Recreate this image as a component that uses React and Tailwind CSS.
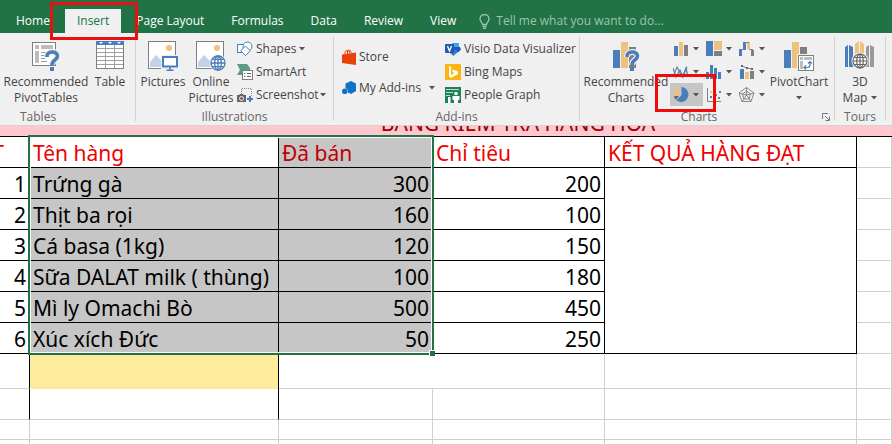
import { useState } from 'react';

const BLUE = '#4a7ebb';
const SAND = '#ebc27e';
const GREY = '#7f7f7f';

const tabs = ['Home', 'Insert', 'Page Layout', 'Formulas', 'Data', 'Review', 'View'];

const goods = [
  { id: 1, name: 'Trứng gà', sold: 300, target: 200 },
  { id: 2, name: 'Thịt ba rọi', sold: 160, target: 100 },
  { id: 3, name: 'Cá basa (1kg)', sold: 120, target: 150 },
  { id: 4, name: 'Sữa DALAT milk ( thùng)', sold: 100, target: 180 },
  { id: 5, name: 'Mì ly Omachi Bò', sold: 500, target: 450 },
  { id: 6, name: 'Xúc xích Đức', sold: 50, target: 250 },
];

/* ---------- icons ---------- */

function Svg({ w = 16, h = 16, children }) {
  return (
    <svg width={w} height={h} viewBox={`0 0 ${w} ${h}`} fill="none" className="shrink-0" aria-hidden="true">
      {children}
    </svg>
  );
}

function QuestionMark({ x = 0 }) {
  const d = `M${x} 16v-1c0-5 10.500-5.500 10.500 0c0 4-5.500 4-5.500 9`;
  return (
    <>
      <path d={d} stroke="#f0f0f0" strokeWidth="6" />
      <path d={d} stroke={BLUE} strokeWidth="3.600" />
      <rect x={x + 3} y="26" width="4" height="4" fill={BLUE} />
    </>
  );
}

function PivotTablesIcon() {
  return (
    <Svg w={30} h={30}>
      <rect x="1.500" y="1.500" width="23" height="23" fill="#fff" stroke={GREY} />
      <path d="M4 4h4v4H4zM10 4h12v4H10zM4 10h4v12H4z" fill="#bcbcbc" />
      <path d="M10 11.500h6M10 14.500h4M10 17.500h4M10 20.500h6" stroke="#9a9a9a" />
      <QuestionMark x={16} />
    </Svg>
  );
}

function TableIcon() {
  return (
    <Svg w={30} h={30}>
      <rect x="1.500" y="1.500" width="27" height="26" fill="#fff" stroke={GREY} />
      <path d="M1 0h28v4H1z" fill={BLUE} />
      <path d="M4 1h4l-2 2zM13 1h4l-2 2zM22 1h4l-2 2z" fill="#fff" />
      <path d="M2 7.500h26M2 11.500h26M2 15.500h26M2 19.500h26M2 23.500h26M10.500 4v23M19.500 4v23" stroke="#a0a0a0" />
    </Svg>
  );
}

function Photo() {
  return (
    <>
      <rect x=".5" y=".5" width="27" height="27" fill="#fff" stroke={GREY} />
      <circle cx="21" cy="7" r="3" fill={SAND} />
      <path d="M2 26v-5l6-7 6 6v6z" fill="#c3d2e5" />
    </>
  );
}

function PicturesIcon() {
  return (
    <Svg w={30} h={30}>
      <Photo />
      <rect x="13" y="14" width="17" height="14" fill="#f0f0f0" />
      <rect x="15" y="16" width="14" height="9.500" fill="#fff" stroke={BLUE} strokeWidth="2" />
      <path d="M22 26v3M18.500 29.200h7" stroke={BLUE} strokeWidth="1.500" />
    </Svg>
  );
}

function OnlinePicturesIcon() {
  return (
    <Svg w={30} h={30}>
      <Photo />
      <circle cx="22" cy="22" r="8.500" fill="#f0f0f0" />
      <g stroke={BLUE} strokeWidth="1.300">
        <circle cx="22" cy="22" r="7" fill="#fff" />
        <ellipse cx="22" cy="22" rx="3.300" ry="7" />
        <path d="M15 22h14M22 15v14M16.500 18.300h11M16.500 25.700h11" />
      </g>
    </Svg>
  );
}

function RecommendedChartsIcon() {
  return (
    <Svg w={30} h={30}>
      <path d="M2 9h7v18H2z" fill={BLUE} />
      <path d="M10 1h7v26h-7z" fill={SAND} />
      <path d="M18 6h7v21h-7z" fill={GREY} />
      <QuestionMark x={16} />
    </Svg>
  );
}

function PivotChartIcon() {
  return (
    <Svg w={30} h={30}>
      <path d="M0 9h7v18H0z" fill={BLUE} />
      <path d="M8 1h7v26H8z" fill={SAND} />
      <path d="M16 6h7v9h-7z" fill={GREY} />
      <rect x="13" y="13" width="17" height="17" fill="#f0f0f0" />
      <rect x="14.500" y="14.500" width="15" height="15" fill="#fff" stroke={GREY} />
      <path d="M16 16h3v3h-3zM20 16h8v3h-8zM16 20h3v8h-3z" fill="#bcbcbc" />
      <path d="M20 26.500h3.500q2.500 0 2.500-3V20.500M22 24.500l-2 2 2 2M24 22.500l2-2 2 2" stroke={BLUE} strokeWidth="1.200" />
    </Svg>
  );
}

function MapIcon() {
  return (
    <Svg w={30} h={30}>
      <path d="M0 6l3-2v22H0zM4 4l4 2v20H4z" fill={BLUE} />
      <path d="M10 3l4-3v22h-4zM15 0l4 3v19h-4z" fill={SAND} />
      <path d="M21 6l3-2v22h-3zM25 4l4 2v20h-4z" fill="#9a9a9a" />
      <circle cx="15" cy="20" r="8.500" fill="#f0f0f0" />
      <g stroke="#666" strokeWidth="1.200">
        <circle cx="15" cy="20" r="7" fill="#fff" />
        <ellipse cx="15" cy="20" rx="3.300" ry="7" />
        <path d="M8 20h14M15 13v14M9.500 16.500h11M9.500 23.500h11" />
      </g>
    </Svg>
  );
}

function ShapesIcon() {
  return (
    <Svg>
      <rect x=".5" y="3.500" width="8" height="8" fill="#fff" stroke={BLUE} />
      <circle cx="10.500" cy="5.500" r="4.500" fill="#fff" stroke={BLUE} />
      <path d="M8.500 5l4.800 4.800-4.800 4.800-4.800-4.800z" fill="#fff" stroke={BLUE} />
    </Svg>
  );
}

function SmartArtIcon() {
  return (
    <Svg>
      <path d="M0 0h10l3 4v2H5v5H0l3-5z" fill="#5b9c84" />
      <rect x="5.500" y="6.500" width="10" height="9" fill="#fff" stroke={GREY} />
      <path d="M7 9.500h1.500M7 12.500h1.500M10 9.500h4M10 12.500h4" stroke="#666" />
    </Svg>
  );
}

function ScreenshotIcon() {
  return (
    <Svg>
      <path d="M4.500 7V1.500h10V9" stroke="#888" strokeDasharray="1 1" />
      <path d="M0 8h2l1-1h3l1 1h2v7H0z" fill="#666" />
      <circle cx="4.500" cy="11.500" r="2" fill="#666" stroke="#f0f0f0" />
      <path d="M10 12h6M13 9v6" stroke={BLUE} strokeWidth="2" />
    </Svg>
  );
}

function StoreIcon() {
  return (
    <Svg w={14} h={16}>
      <path d="M3 5.500V2.500q2-2 4.500 0V4M5.500 5V1.500q2.500-1.500 3.500 1V4" stroke="#e8410a" />
      <path d="M0 5.500L14 3.500V16L0 14z" fill="#e8410a" />
    </Svg>
  );
}

function AddinsIcon() {
  return (
    <Svg w={14} h={16}>
      <path d="M9 1l5 2.500v7.500L9 14l-3-1.500V10L3.500 8V3.500z" fill="#1072c4" />
      <circle cx="2.800" cy="11.300" r="2.800" fill="#1072c4" />
    </Svg>
  );
}

function VisioIcon() {
  return (
    <Svg>
      <rect x="7" y="2" width="7" height="5" fill="#41a5ee" />
      <path d="M9 6h6l1 2.500-3 3H9z" fill="#185abd" />
      <path d="M5 9h7v2.500L8.500 15 5 12z" fill="#2b7cd3" />
      <rect y="3" width="9" height="9" rx="1" fill="#2458ac" />
      <path d="M2.500 5l2 5 2-5" stroke="#fff" strokeWidth="1.300" />
    </Svg>
  );
}

function BingIcon() {
  return (
    <Svg>
      <path d="M0 0h16v16H0z" fill="#fbb612" />
      <path d="M4 2l2 .8v8.200l3.500-2-1.500-.8L7 5.500l6 2V10l-7 4-2-1.500z" fill="#fff" />
    </Svg>
  );
}

function PeopleIcon() {
  return (
    <Svg>
      <path d="M0 0h16v16H0z" fill="#1e8057" />
      <path d="M1 2.500h13M1 5.500h7M1 8.500h4" stroke="#b9dccb" />
      <circle cx="11" cy="6.500" r="1.800" fill="#fff" />
      <path d="M7.500 9h7v4H13v3H9v-3H7.500zM3 10h2.500v6H3z" fill="#fff" />
    </Svg>
  );
}

const chartKinds = [
  {
    label: 'Column chart',
    art: (
      <>
        <path d="M1 5h4v10H1z" fill={BLUE} />
        <path d="M6 1h4v14H6z" fill={SAND} />
        <path d="M11 4h4v11h-4z" fill={GREY} />
      </>
    ),
  },
  {
    label: 'Hierarchy chart',
    art: (
      <>
        <path d="M0 0h7v15H0z" fill={BLUE} />
        <path d="M8 0h8v9H8z" fill={SAND} />
        <path d="M8 10h8v5H8z" fill={GREY} />
      </>
    ),
  },
  {
    label: 'Waterfall chart',
    art: (
      <>
        <path d="M0 8h3v7H0zM4 1h3v8H4z" fill={BLUE} />
        <path d="M8 1h3v7H8z" fill={SAND} />
        <path d="M12 9h3v6h-3z" fill={GREY} />
        <path d="M2 8.500h3M6 1.500h4M10 8.500h4" stroke={GREY} />
      </>
    ),
  },
  {
    label: 'Line chart',
    art: (
      <>
        <path d="M0 13L4 3l5 10 5-10" stroke={GREY} strokeWidth="1.200" />
        <path d="M0 4l3 9 4-7 3 7 3-9 2 9" stroke={BLUE} strokeWidth="1.200" />
      </>
    ),
  },
  {
    label: 'Statistic chart',
    art: <path d="M0 8h3v7H0zM4 1h3v14H4zM8 4h3v11H8zM12 8h3v7h-3z" fill={BLUE} />,
  },
  {
    label: 'Combo chart',
    art: (
      <>
        <path d="M1 5h4v10H1z" fill={BLUE} />
        <path d="M6 8h4v7H6z" fill={SAND} />
        <path d="M11 7h4v8h-4z" fill={GREY} />
        <path d="M3 2l5 2 5 1" stroke={GREY} />
        <path d="M2 1h2v2H2zM7 3h2v2H7zM12 4h2v2h-2z" fill="#666" />
      </>
    ),
  },
  {
    label: 'Pie chart',
    active: true,
    art: (
      <>
        <path d="M7 7L7 .5A7 7 0 0 0 0 8h7z" fill={SAND} />
        <path d="M6 9H1a7 7 0 0 0 2 4z" fill="#666" />
        <path d="M8.500 0a7.500 7.500 0 1 1-5 13.500L8.500 8z" fill={BLUE} />
      </>
    ),
  },
  {
    label: 'Scatter chart',
    art: (
      <>
        <path d="M1.500 1v13.500H15" stroke={GREY} />
        <path d="M4 9h2v2H4zM9 7h2v2H9zM13 4h2v2h-2z" fill={BLUE} />
        <path d="M4 4h2v2H4zM8 11h2v2H8z" fill={SAND} />
        <path d="M12 10h2v2h-2z" fill={GREY} />
      </>
    ),
  },
  {
    label: 'Radar chart',
    art: (
      <>
        <path d="M7.500 .5l7.500 5.500-3 8.500H3L0 6zM7.500 4l4 3-1.500 5H5L3.500 7z" stroke="#888" />
        <path d="M7.500 .5V8l7.500-2M7.500 8l4.500 6.500M7.500 8L3 14.500M7.500 8L0 6" stroke="#888" />
      </>
    ),
  },
];

/* ---------- ribbon ---------- */

function Caret() {
  return (
    <svg width="6" height="4" viewBox="0 0 6 4" className="shrink-0" aria-hidden="true">
      <path d="M0 0h6L3 3.500z" fill="#555" />
    </svg>
  );
}

function Group({ title, className, titleClass = 'text-center', children }) {
  return (
    <section className={`flex shrink-0 flex-col pt-1 ${className}`}>
      <div className="flex h-[72px] items-start">{children}</div>
      <div className={`relative h-4 text-xs leading-4 text-[#666] ${titleClass}`}>{title}</div>
    </section>
  );
}

function Separator() {
  return <div className="my-1 w-px shrink-0 bg-[#d2d2d2]" />;
}

function LargeButton({ icon, lines, className, caret }) {
  return (
    <button type="button" className={`flex shrink-0 flex-col items-center gap-[3px] pt-1 leading-4 whitespace-nowrap ${className}`}>
      {icon}
      <span className="flex flex-col items-center">
        {lines.map((line, i) => (
          <span key={line} className="flex h-4 items-center gap-1">
            {line}
            {caret && lines.length > 1 && i === lines.length - 1 && <Caret />}
          </span>
        ))}
        {caret && lines.length === 1 && (
          <span className="flex h-4 items-center">
            <Caret />
          </span>
        )}
      </span>
    </button>
  );
}

function SmallButton({ icon, label, caret, className = 'h-[23px]', caretGap = 'gap-[3px]' }) {
  return (
    <button type="button" className={`flex items-center gap-[3px] whitespace-nowrap ${className}`}>
      {icon}
      <span className={`flex items-center ${caretGap}`}>
        {label}
        {caret && <Caret />}
      </span>
    </button>
  );
}

function ChartGallery() {
  return (
    <div className="grid shrink-0 grid-cols-3">
      {chartKinds.map(({ label, art, active }) => (
        <button
          key={label}
          type="button"
          aria-label={label}
          className={`relative flex h-[23px] w-[33px] items-center gap-1 pl-[3px] ${active ? 'bg-[#c6c6c6]' : ''}`}
        >
          <Svg>{art}</Svg>
          <Caret />
          {active && <span className="absolute -top-[9px] -left-[15px] z-10 h-[38px] w-[61px] border-3 border-[#f00a0a]" />}
        </button>
      ))}
    </div>
  );
}

function Ribbon() {
  return (
    <div className="flex h-[93px] border-b border-[#d4d4d4] bg-[#f0f0f0] text-xs text-[#444]">
      <Group title="Tables" className="w-[135px]" titleClass="pl-5 text-left">
        <LargeButton icon={<PivotTablesIcon />} lines={['Recommended', 'PivotTables']} className="w-[92px]" />
        <LargeButton icon={<TableIcon />} lines={['Table']} className="w-[36px]" />
      </Group>
      <Separator />
      <Group title="Illustrations" className="w-[197px]">
        <LargeButton icon={<PicturesIcon />} lines={['Pictures']} className="w-[54px]" />
        <LargeButton icon={<OnlinePicturesIcon />} lines={['Online', 'Pictures']} className="w-[42px]" />
        <div className="ml-[5px]">
          <SmallButton icon={<ShapesIcon />} label="Shapes" caret />
          <SmallButton icon={<SmartArtIcon />} label="SmartArt" />
          <SmallButton icon={<ScreenshotIcon />} label="Screenshot" caret caretGap="gap-px" />
        </div>
      </Group>
      <Separator />
      <Group title="Add-ins" className="w-[245px]">
        <div className="w-[111px] pt-1 pl-2">
          <SmallButton icon={<StoreIcon />} label="Store" className="h-[31px]" />
          <SmallButton icon={<AddinsIcon />} label="My Add-ins" caret caretGap="gap-2" className="h-[31px]" />
        </div>
        <div>
          <SmallButton icon={<VisioIcon />} label="Visio Data Visualizer" />
          <SmallButton icon={<BingIcon />} label="Bing Maps" />
          <SmallButton icon={<PeopleIcon />} label="People Graph" />
        </div>
      </Group>
      <Separator />
      <Group
        title={
          <>
            Charts
            <button type="button" aria-label="Charts options" className="absolute right-1 bottom-1">
              <Svg w={8} h={8}>
                <path d="M.5 6V.5H6M3 3l4 4M7.500 3.500v4h-4" stroke="#777" />
              </Svg>
            </button>
          </>
        }
        className="w-[254px]"
        titleClass="pr-4 text-center"
      >
        <LargeButton icon={<RecommendedChartsIcon />} lines={['Recommended', 'Charts']} className="w-[90px] pl-[2px]" />
        <ChartGallery />
        <LargeButton icon={<PivotChartIcon />} lines={['PivotChart']} caret className="w-[60px]" />
      </Group>
      <Separator />
      <Group title="Tours" className="w-[50px]">
        <LargeButton icon={<MapIcon />} lines={['3D', 'Map']} caret className="w-full" />
      </Group>
      <Separator />
    </div>
  );
}

function TabBar({ active, onSelect }) {
  return (
    <nav className="flex h-[33px] items-end gap-[3px] bg-[#217346] pl-1 text-xs text-white">
      {tabs.map((tab) => (
        <button
          key={tab}
          type="button"
          onClick={() => onSelect(tab)}
          className={`relative h-6 px-3 whitespace-nowrap ${tab === active ? 'bg-[#f0f0f0] text-[#217346]' : ''}`}
        >
          {tab}
          {tab === 'Insert' && <span className="absolute -top-[7px] -left-[15px] z-10 h-[38px] w-[88px] border-3 border-[#e81010]" />}
        </button>
      ))}
      <label className="ml-2 flex h-6 flex-1 items-center gap-1.5 text-[#9dc4ae]">
        <Svg w={11} h={15}>
          <path d="M3.500 10.500c0-2-2.500-3-2.500-5.500a4.500 4.500 0 0 1 9 0c0 2.500-2.500 3.500-2.500 5.500zM3.500 12.500h4M4 14.500h3" stroke="#9dc4ae" strokeWidth="1.300" />
        </Svg>
        <input
          type="text"
          aria-label="Tell me"
          placeholder="Tell me what you want to do..."
          className="min-w-0 flex-1 bg-transparent outline-none placeholder:text-[#9dc4ae]"
        />
      </label>
    </nav>
  );
}

/* ---------- sheet ---------- */

function Sheet() {
  const line = 'border-r border-b border-black pt-[2px] pb-0';
  const grid = 'border-r border-b border-[#d0d0d0]';

  return (
    <div className="relative overflow-hidden bg-white font-['Noto_Sans',sans-serif] text-[21px] leading-[28px] text-black">
      <table className="w-full table-fixed border-separate border-spacing-0">
        <colgroup>
          <col className="w-[30px]" />
          <col className="w-[249px]" />
          <col className="w-[154px]" />
          <col className="w-[172px]" />
          <col className="w-[252px]" />
          <col />
        </colgroup>
        <thead>
          <tr>
            <th colSpan={6} className="border-b border-black bg-[#ffc7ce] p-0 font-normal text-[#9c0006]">
              <div className="flex h-[10px] items-end justify-center overflow-hidden pl-36 leading-[26px]">BẢNG KIỂM TRA HÀNG HÓA</div>
            </th>
          </tr>
          <tr className="h-[31px] text-left text-[#f00000]">
            <th className={`${line} px-0 font-normal`}>
              <div className="flex justify-end overflow-hidden pr-[25px]">STT</div>
            </th>
            <th className={`${line} px-[3px] font-normal`}>Tên hàng</th>
            <th className={`${line} bg-[#c6c6c6] px-[3px] font-normal text-[#c00000]`}>Đã bán</th>
            <th className={`${line} px-[3px] font-normal`}>Chỉ tiêu</th>
            <th className={`${line} px-[3px] font-normal`}>KẾT QUẢ HÀNG ĐẠT</th>
            <th className={`${grid} p-0`} />
          </tr>
        </thead>
        <tbody>
          {goods.map((item, i) => (
            <tr key={item.id} className="h-[31px]">
              <td className={`${line} px-[3px] text-right`}>{item.id}</td>
              <td className={`${line} bg-[#c6c6c6] px-[3px] whitespace-nowrap`}>{item.name}</td>
              <td className={`${line} bg-[#c6c6c6] px-[3px] text-right`}>{item.sold}</td>
              <td className={`${line} px-[3px] text-right`}>{item.target}</td>
              {i === 0 && <td rowSpan={goods.length} className={`${line} px-0`} />}
              <td className={`${grid} p-0`} />
            </tr>
          ))}
          <tr className="h-[35px]">
            <td className="border-r border-b border-r-black border-b-[#d0d0d0] p-0" />
            <td className="border-r border-black bg-[#ffeb9c] p-0" />
            <td colSpan={2} className={`${grid} p-0`} />
            <td className={`${grid} p-0`} />
            <td className={`${grid} p-0`} />
          </tr>
          <tr className="h-[31px]">
            <td className="border-r border-b border-r-black border-b-[#d0d0d0] p-0" />
            <td className="border-r border-b border-r-black border-b-[#d0d0d0] p-0" />
            <td className={`${grid} p-0`} />
            <td className={`${grid} p-0`} />
            <td className={`${grid} p-0`} />
            <td className={`${grid} p-0`} />
          </tr>
          {['first', 'second'].map((row) => (
            <tr key={row} className="h-5">
              {[0, 1, 2, 3, 4, 5].map((col) => (
                <td key={col} className={`${grid} p-0`} />
              ))}
            </tr>
          ))}
        </tbody>
      </table>

      {/* selected range with its fill handle */}
      <div className="pointer-events-none absolute top-[9px] left-[28px] h-[220px] w-[406px] border-2 border-[#217346]">
        <div className="h-full border border-white" />
        <div className="absolute -right-[3px] -bottom-[3px] size-[6px] border-t border-l border-white bg-[#217346]" />
      </div>
    </div>
  );
}

export default function App() {
  const [tab, setTab] = useState('Insert');

  return (
    <div className="h-screen overflow-hidden bg-white font-['Open_Sans','Noto_Sans',sans-serif]">
      <TabBar active={tab} onSelect={setTab} />
      <Ribbon />
      <Sheet />
    </div>
  );
}
